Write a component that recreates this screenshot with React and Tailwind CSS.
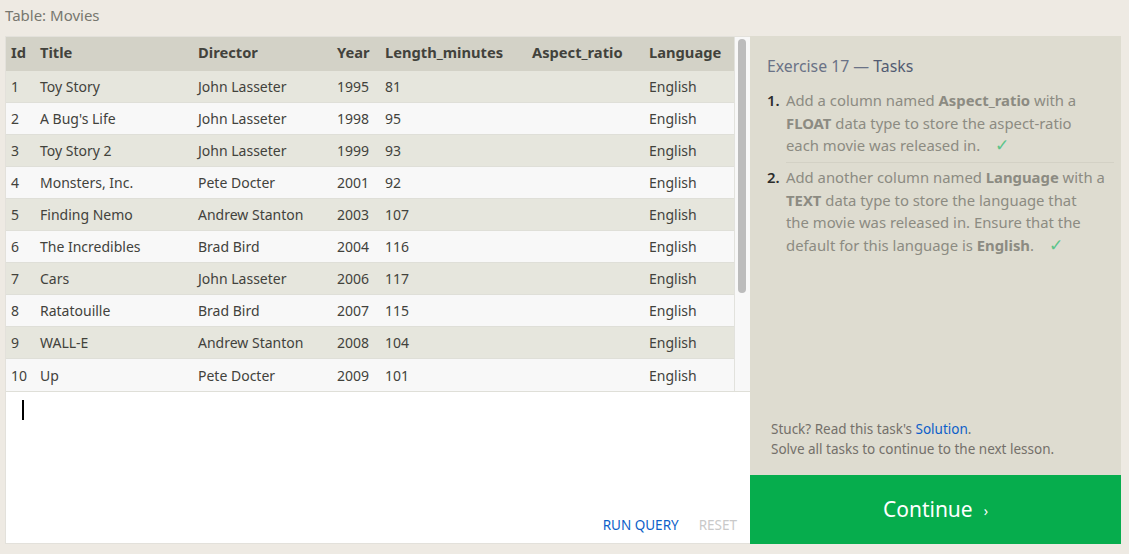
const movies = [
  [1, 'Toy Story', 'John Lasseter', 1995, 81],
  [2, "A Bug's Life", 'John Lasseter', 1998, 95],
  [3, 'Toy Story 2', 'John Lasseter', 1999, 93],
  [4, 'Monsters, Inc.', 'Pete Docter', 2001, 92],
  [5, 'Finding Nemo', 'Andrew Stanton', 2003, 107],
  [6, 'The Incredibles', 'Brad Bird', 2004, 116],
  [7, 'Cars', 'John Lasseter', 2006, 117],
  [8, 'Ratatouille', 'Brad Bird', 2007, 115],
  [9, 'WALL-E', 'Andrew Stanton', 2008, 104],
  [10, 'Up', 'Pete Docter', 2009, 101],
];

const columns = ['Id', 'Title', 'Director', 'Year', 'Length_minutes', 'Aspect_ratio', 'Language'];

const gridCols = 'grid grid-cols-[29px_158px_139px_48px_147px_117px_90px]';

const Check = () => <span className="ml-[11px] text-[17px] leading-none text-[#5cc48a]">✓</span>;

export default function App() {
  return (
    <div className="h-[554px] w-[1129px] overflow-hidden bg-[#eeeae3] font-['Noto_Sans',sans-serif] text-[14px]">
      <div className="h-[36px] pl-[5px] pt-[5px] text-[15px] leading-[20px] text-[#77776f]">Table: Movies</div>
      <div className="flex h-[508px] pl-[5px]">
        <div className="flex w-[745px] flex-col border border-r-0 border-[#e3e1db] bg-white">
          <div className="flex h-[354px]">
            <div className="w-[728px] overflow-hidden">
              <div className={`${gridCols} h-[34px] items-center bg-[#d3d2c7] pb-[3px] text-[14.7px] font-bold text-[#42423c]`}>
                {columns.map((c) => (
                  <div key={c} className="pl-[5px]">{c}</div>
                ))}
              </div>
              {movies.map((m, i) => (
                <div
                  key={m[0]}
                  className={`${gridCols} h-[32px] items-center text-[#42423c] ${i % 2 === 0 ? 'bg-[#e6e6dd]' : 'bg-[#f8f8f8]'} ${i === 9 ? 'pt-[1px]' : 'border-b border-[#dfdfd8]'}`}
                >
                  <div className="pl-[5px]">{m[0]}</div>
                  <div className="pl-[5px]">{m[1]}</div>
                  <div className="pl-[5px]">{m[2]}</div>
                  <div className="pl-[5px]">{m[3]}</div>
                  <div className="pl-[5px]">{m[4]}</div>
                  <div className="pl-[5px]"></div>
                  <div className="pl-[5px]">English</div>
                </div>
              ))}
            </div>
            <div className="flex-1 border-l border-[#e2e2dd] bg-[#f8f8f8] pl-[3px] pt-[2px]">
              <div className="h-[254px] w-[8px] rounded-full bg-[#bcbcbc]"></div>
            </div>
          </div>
          <div className="flex flex-1 flex-col justify-between border-t border-[#dfdfd8]">
            <div className="ml-[16px] mt-[8px] h-[20px] w-[2px] bg-black"></div>
            <div className="flex justify-end gap-[20px] pb-[8px] pr-[13px] text-[13.5px] leading-[20px]">
              <span className="text-[#0d5fc9]">RUN QUERY</span>
              <span className="text-[#c9c9c9]">RESET</span>
            </div>
          </div>
        </div>
        <div className="flex w-[371px] flex-col bg-[#dedcd0]">
          <div className="flex flex-1 flex-col pl-[17px] pr-[7px]">
            <div className="mt-[19px] text-[15.8px] leading-[22px] text-[#6a7286]">
              Exercise 17 — <span className="text-[#525b72]">Tasks</span>
            </div>
            <ol className="mt-[12px] text-[14.85px] leading-[22.5px] text-[#8c8b82]">
              <li className="flex">
                <span className="w-[19px] shrink-0 font-semibold text-[#2c2c2c]">1.</span>
                <div className="flex-1 border-b border-[#d3d1c5] pb-[5px]">
                  Add a column named <b>Aspect_ratio</b> with a<br />
                  <b>FLOAT</b> data type to store the aspect-ratio<br />
                  each movie was released in. <Check />
                </div>
              </li>
              <li className="mt-[3.5px] flex">
                <span className="w-[19px] shrink-0 font-semibold text-[#2c2c2c]">2.</span>
                <div className="flex-1">
                  Add another column named <b>Language</b> with a<br />
                  <b>TEXT</b> data type to store the language that<br />
                  the movie was released in. Ensure that the<br />
                  default for this language is <b>English</b>. <Check />
                </div>
              </li>
            </ol>
            <div className="mt-auto pb-[16px] pl-[4px] text-[13.5px] leading-[20px] text-[#74706a]">
              <div>Stuck? Read this task's <span className="text-[#0d5fc9]">Solution</span>.</div>
              <div>Solve all tasks to continue to the next lesson.</div>
            </div>
          </div>
          <div className="flex h-[69px] items-center justify-center bg-[#06ad4d] pt-[1px] text-[21px] text-white">
            Continue <span className="ml-[11px] text-[14px]">›</span>
          </div>
        </div>
      </div>
    </div>
  );
}
